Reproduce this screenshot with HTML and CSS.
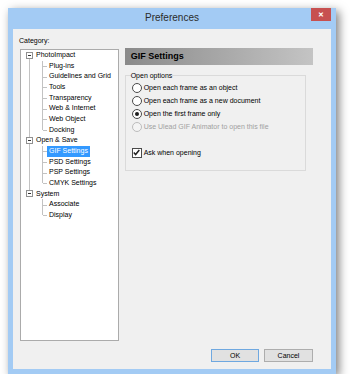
FILE: index.html
```html
<!DOCTYPE html>
<html lang="en">
<head>
    <meta charset="UTF-8">
    <meta name="viewport" content="width=device-width, initial-scale=1.0">
    <title>Preferences</title>
    <link rel="stylesheet" href="styles.css">
</head>
<body>
<div class="window">
    <div class="titlebar">
        <span class="title">Preferences</span>
        <span class="close">&#x2715;</span>
    </div>
    <div class="client">
        <div class="category-label">Category:</div>
        <div class="main">
            <ul class="tree">
                <li class="root">
                    <div class="row"><span class="box"></span><span class="label">PhotoImpact</span></div>
                    <ul class="kids">
                        <li><span class="label">Plug-ins</span></li>
                        <li><span class="label">Guidelines and Grid</span></li>
                        <li><span class="label">Tools</span></li>
                        <li><span class="label">Transparency</span></li>
                        <li><span class="label">Web &amp; Internet</span></li>
                        <li><span class="label">Web Object</span></li>
                        <li><span class="label">Docking</span></li>
                    </ul>
                </li>
                <li class="root">
                    <div class="row"><span class="box"></span><span class="label">Open &amp; Save</span></div>
                    <ul class="kids">
                        <li><span class="label selected">GIF Settings</span></li>
                        <li><span class="label">PSD Settings</span></li>
                        <li><span class="label">PSP Settings</span></li>
                        <li><span class="label">CMYK Settings</span></li>
                    </ul>
                </li>
                <li class="root">
                    <div class="row"><span class="box"></span><span class="label">System</span></div>
                    <ul class="kids">
                        <li><span class="label">Associate</span></li>
                        <li><span class="label">Display</span></li>
                    </ul>
                </li>
            </ul>

            <div class="panel">
                <div class="panel-header">GIF Settings</div>
                <fieldset class="group">
                    <legend>Open options</legend>
                    <div class="option"><span class="radio"></span>Open each frame as an object</div>
                    <div class="option"><span class="radio"></span>Open each frame as a new document</div>
                    <div class="option"><span class="radio checked"></span>Open the first frame only</div>
                    <div class="option disabled"><span class="radio"></span>Use Ulead GIF Animator to open this file</div>
                    <div class="option check-row">
                        <span class="checkbox">
                            <svg width="7" height="7" viewBox="0 0 7 7"><path d="M0.8 3.6 L2.6 5.5 L6.3 1.0" fill="none" stroke="#222" stroke-width="1.5"/></svg>
                        </span>Ask when opening
                    </div>
                </fieldset>
            </div>
        </div>
        <div class="buttons">
            <button class="btn default">OK</button>
            <button class="btn">Cancel</button>
        </div>
    </div>
</div>
</body>
</html>
```

FILE: styles.css
```css
body {
    margin: 0;
    padding: 0;
    background-color: #FFFFFF;
    font-family: 'Liberation Sans', Arial, sans-serif;
    font-size: 7px;
    color: #000000;
}

.window {
    margin: 8px 0 0 8px;
    width: 318px;
    height: 361px;
    background-color: #A3CBF4;
    border: 5px solid #A3CBF4;
    border-top: none;
    box-shadow: 3px 3px 9px rgba(0, 0, 0, 0.5);
}

.titlebar {
    height: 21px;
    display: flex;
    justify-content: center;
    position: relative;
}

.title {
    font-size: 10px;
    line-height: 19px;
    color: #2B2B2B;
}

.close {
    position: absolute;
    right: 0;
    top: 0;
    width: 20px;
    height: 13px;
    background-color: #C75050;
    color: #FFFFFF;
    font-size: 7px;
    font-weight: bold;
    line-height: 13px;
    text-align: center;
}

.client {
    background-color: #F0F0F0;
    height: 340px;
    box-sizing: border-box;
    padding: 6px 18px 7px 6px;
    display: flex;
    flex-direction: column;
}

.category-label {
    line-height: 11px;
    height: 11px;
    margin-bottom: 3px;
}

.main {
    display: flex;
    height: 292px;
    margin-left: 1px;
}

/* tree view */

.tree {
    list-style: none;
    margin: 0;
    padding: 0;
    width: 99px;
    height: 292px;
    box-sizing: border-box;
    border: 1px solid #ABABAB;
    background-color: #FFFFFF;
}

.tree ul {
    list-style: none;
    margin: 0;
    padding: 0;
}

.root {
    position: relative;
}

.root:not(:last-child)::before {
    content: '';
    position: absolute;
    left: 8px;
    top: 5.3px;
    height: 100%;
    border-left: 1px solid #C2C2C2;
}

.row {
    height: 10.67px;
    display: flex;
    align-items: center;
}

.box {
    position: relative;
    z-index: 1;
    width: 5px;
    height: 5px;
    margin-left: 5px;
    border: 1px solid #919191;
    background-color: #FFFFFF;
}

.box::after {
    content: '';
    position: absolute;
    left: 1px;
    top: 2px;
    width: 3px;
    height: 1px;
    background-color: #333333;
}

.label {
    padding: 0 2px;
    line-height: 10.67px;
    white-space: nowrap;
}

.row .label {
    margin-left: 1px;
}

.kids li {
    position: relative;
    height: 10.67px;
    padding-left: 26px;
    display: flex;
    align-items: center;
}

.kids li::before {
    content: '';
    position: absolute;
    left: 21px;
    top: 0;
    height: 100%;
    border-left: 1px solid #C2C2C2;
}

.kids li:last-child::before {
    height: 50%;
}

.kids li::after {
    content: '';
    position: absolute;
    left: 22px;
    top: 50%;
    width: 4px;
    border-top: 1px solid #C2C2C2;
}

.label.selected {
    background-color: #3399FF;
    color: #FFFFFF;
}

/* settings panel */

.panel {
    margin-left: 6px;
    margin-top: -1px;
    width: 189px;
}

.panel-header {
    height: 17px;
    line-height: 17px;
    padding-left: 6px;
    font-size: 9px;
    font-weight: bold;
    background: linear-gradient(to right, #8A8A8A, #C4C4C4);
}

.group {
    margin: 6px 0 0 0;
    width: 181px;
    box-sizing: border-box;
    border: 1px solid #DADADA;
    padding: 1px 0 11px 6px;
}

.group legend {
    padding: 0;
    margin-left: -1px;
    line-height: 9px;
}

.option {
    height: 13px;
    display: flex;
    align-items: center;
    white-space: nowrap;
}

.radio {
    width: 8px;
    height: 8px;
    border-radius: 50%;
    border: 1px solid #4A4A4A;
    background-color: #FFFFFF;
    margin-right: 2px;
    display: flex;
    align-items: center;
    justify-content: center;
}

.radio.checked::after {
    content: '';
    width: 4px;
    height: 4px;
    border-radius: 50%;
    background-color: #1E1E1E;
}

.option.disabled {
    color: #A0A0A0;
}

.option.disabled .radio {
    border-color: #BCBCBC;
    background-color: #F4F4F4;
}

.check-row {
    margin-top: 13px;
}

.checkbox {
    width: 8px;
    height: 8px;
    border: 1px solid #4A4A4A;
    background-color: #FFFFFF;
    margin-right: 2px;
    display: flex;
    align-items: center;
    justify-content: center;
}

/* dialog buttons */

.buttons {
    display: flex;
    justify-content: flex-end;
    gap: 5px;
    margin-top: 8px;
}

.btn {
    height: 13px;
    padding: 0;
    width: 49px;
    font-family: 'Liberation Sans', Arial, sans-serif;
    font-size: 7px;
    color: #000000;
    background-color: #E1E1E1;
    border: 1px solid #ADADAD;
}

.btn.default {
    width: 48px;
    border-color: #6FA8E0;
}
```
